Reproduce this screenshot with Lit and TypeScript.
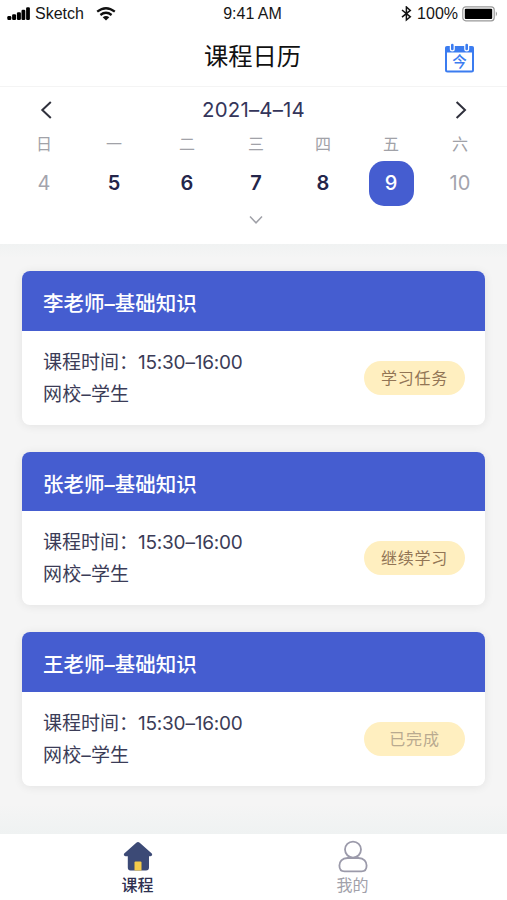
import { LitElement, html, css } from "lit";
import { customElement, property } from "lit/decorators.js";
import { classMap } from "lit/directives/class-map.js";

interface Day {
  week: string;
  date: number;
  kind: "muted" | "normal" | "selected";
}

const DAYS: Day[] = [
  { week: "日", date: 4, kind: "muted" },
  { week: "一", date: 5, kind: "normal" },
  { week: "二", date: 6, kind: "normal" },
  { week: "三", date: 7, kind: "normal" },
  { week: "四", date: 8, kind: "normal" },
  { week: "五", date: 9, kind: "selected" },
  { week: "六", date: 10, kind: "muted" },
];

const LESSONS = [
  { title: "李老师–基础知识", action: "学习任务", done: false },
  { title: "张老师–基础知识", action: "继续学习", done: false },
  { title: "王老师–基础知识", action: "已完成", done: true },
];

@customElement("status-bar")
export class StatusBar extends LitElement {
  static styles = css`
    :host { display: flex; height: 28px; padding: 0 9px 0 7px; align-items: center; color: #161616; font-family: "Liberation Sans", sans-serif; }
    .side { flex: 1; display: flex; align-items: center; }
    .end { justify-content: flex-end; }
    .carrier { margin: 0 12px 0 5px; }
    .level { margin: 0 4px 0 5px; }
    .text { font-size: 16px; line-height: 28px; white-space: nowrap; }
    svg { display: block; flex: none; }
  `;
  render() {
    return html`
      <div class="side">
        <svg width="23" height="14" viewBox="0 0 23 14">
          <rect x="0.3" y="9" width="4" height="4" rx="1.2" />
          <rect x="5.1" y="7.3" width="4" height="5.7" rx="1.2" />
          <rect x="9.9" y="5.2" width="4" height="7.8" rx="1.2" />
          <rect x="14.5" y="2.8" width="3.8" height="10.2" rx="1.2" />
          <rect x="19.1" y="0.2" width="3.8" height="12.8" rx="1.2" />
        </svg>
        <span class="text carrier">Sketch</span>
        <svg width="20" height="14" viewBox="0 0 20 14" fill="none" stroke="#111" stroke-width="2.3">
          <path d="M1.2 4.7 Q10 -2.3 18.8 4.7" />
          <path d="M4.4 8 Q10 3.6 15.6 8" />
          <path d="M6.7 10.2 Q10 7.6 13.3 10.2 L10 13.4Z" fill="#111" stroke="none" />
        </svg>
      </div>
      <span class="text">9:41 AM</span>
      <div class="side end">
        <svg width="11" height="16" viewBox="0 0 11 16" fill="none" stroke="#111" stroke-width="1.5">
          <path d="M1 4 L9.3 10.8 L5.4 14 V1 L9.3 4.4 L1 11.2" />
        </svg>
        <span class="text level">100%</span>
        <svg width="36" height="16" viewBox="0 0 36 16">
          <rect x="0.8" y="0.8" width="31.4" height="14" rx="3" fill="#fff" stroke="#999" stroke-width="1.2" />
          <rect x="2.8" y="2.7" width="27.4" height="10.2" rx="1" />
          <path d="M33.8 5.2 Q36.2 7.8 33.8 10.4Z" fill="#999" />
        </svg>
      </div>
    `;
  }
}

@customElement("week-calendar")
export class WeekCalendar extends LitElement {
  static styles = css`
    :host { display: block; height: 157px; background: #fff; color: #34355a; }
    .month { display: flex; justify-content: space-between; align-items: center; height: 46px; padding: 0 39px; }
    .label { font-size: 20.4px; line-height: 46px; letter-spacing: 0.2px; }
    .week { display: grid; grid-template-columns: 70px 70px 76px 62px 72px 64px 74px; padding-left: 9px; }
    .day { display: flex; flex-direction: column; align-items: center; }
    .name { font-size: 16px; line-height: 22px; color: #a1a2a8; height: 28px; }
    .date { width: 45px; height: 45px; border-radius: 15px; line-height: 45px; text-align: center; font-size: 20px; font-weight: 600; color: #24254a; }
    .muted { color: #a3a4ad; font-weight: 400; }
    .selected { background: #455dd0; color: #fff; font-weight: 500; }
    .more { display: flex; justify-content: center; padding: 8px 0 0 4px; }
    svg { display: block; }
  `;
  render() {
    return html`
      <div class="month">
        <svg width="14" height="20" viewBox="0 0 14 20" fill="none" stroke="#2f303c" stroke-width="2"><path d="M11.8 2 L3.3 10 L11.8 18" /></svg>
        <span class="label">2021–4–14</span>
        <svg width="14" height="20" viewBox="0 0 14 20" fill="none" stroke="#2f303c" stroke-width="2"><path d="M2.6 2 L11 10 L2.6 18" /></svg>
      </div>
      <div class="week">
        ${DAYS.map(
          (d) => html`<div class="day">
            <span class="name">${d.week}</span>
            <span class=${classMap({ date: true, muted: d.kind === "muted", selected: d.kind === "selected" })}>${d.date}</span>
          </div>`
        )}
      </div>
      <div class="more">
        <svg width="16" height="12" viewBox="0 0 16 12" fill="none" stroke="#a0a1a8" stroke-width="1.5"><path d="M2 2.5 L8 8.8 L14 2.5" /></svg>
      </div>
    `;
  }
}

@customElement("lesson-card")
export class LessonCard extends LitElement {
  @property() heading = "";
  @property() action = "";
  @property({ type: Boolean }) done = false;

  static styles = css`
    :host { display: block; height: 153.7px; border-radius: 8px; overflow: hidden; background: #fff; box-shadow: 0 1px 10px rgba(0, 0, 0, 0.08); }
    .heading { height: 59.5px; line-height: 66px; padding-left: 21px; background: #455dd0; color: #fff; font-size: 20.5px; font-weight: 500; }
    .body { display: flex; justify-content: space-between; align-items: center; height: 94px; padding: 0 20px 0 21px; }
    .info { font-size: 19px; line-height: 32px; color: #3b3c57; padding-top: 2px; }
    .time { letter-spacing: -0.22px; }
    .org { letter-spacing: 0.15px; }
    .pill { width: 101px; height: 34px; border-radius: 17px; background: #ffefc0; color: #927555; font-size: 16px; line-height: 34px; letter-spacing: 0.8px; text-align: center; }
    .done { color: #b9aa90; }
  `;
  render() {
    return html`
      <div class="heading">${this.heading}</div>
      <div class="body">
        <div class="info">
          <div>课程时间：<span class="time">15:30–16:00</span></div>
          <div class="org">网校–学生</div>
        </div>
        <div class=${classMap({ pill: true, done: this.done })}>${this.action}</div>
      </div>
    `;
  }
}

@customElement("app-root")
export class AppRoot extends LitElement {
  static styles = css`
    :host { display: flex; flex-direction: column; width: 507px; height: 900px; overflow: hidden; background: #f5f5f5; font-family: Inter, "Noto Sans CJK SC", sans-serif; }
    .top { background: #fff; height: 87px; box-sizing: border-box; border-bottom: 1px solid #f4f4f4; }
    .bar { display: grid; grid-template-columns: 1fr auto 1fr; align-items: center; height: 56px; padding: 0 32px 0 30px; }
    .title { font-size: 24.3px; line-height: 56px; color: #111; }
    .today { justify-self: end; margin-top: 3px; }
    .list { flex: 1; display: flex; flex-direction: column; gap: 27px; padding: 27px 22px 0; background: linear-gradient(#f0f2f2, #f5f5f5 14px, #f5f5f5 560px, #eff2f2); }
    .tabs { display: flex; height: 66px; background: #fff; padding: 0 47px 0 30px; }
    .tab { flex: 1; display: flex; flex-direction: column; align-items: center; padding-top: 6px; font-size: 16px; line-height: 25px; color: #a1a1aa; }
    .active { color: #2e3050; font-weight: 500; }
    svg { display: block; }
    .glyph { font-size: 14.5px; font-weight: 500; fill: #3b7cf0; text-anchor: middle; }
  `;

  render() {
    return html`
      <div class="top">
        <status-bar></status-bar>
        <div class="bar">
          <span></span>
          <span class="title">课程日历</span>
          <svg class="today" width="31" height="30" viewBox="0 0 31 30">
            <rect x="2" y="4" width="27" height="24.6" rx="1.5" fill="#fff" stroke="#3b7cf0" stroke-width="2" />
            <rect x="1.5" y="3.5" width="28" height="6" fill="#3b7cf0" />
            <g stroke-linecap="round">
              <path d="M8.3 1.5 V6 M22.7 1.5 V6" stroke="#fff" stroke-width="5" />
              <path d="M8.3 2 V6 M22.7 2 V6" stroke="#3b7cf0" stroke-width="2.6" />
            </g>
            <text class="glyph" x="15.5" y="23.6">今</text>
          </svg>
        </div>
      </div>
      <week-calendar></week-calendar>
      <div class="list">
        ${LESSONS.map((l) => html`<lesson-card .heading=${l.title} .action=${l.action} .done=${l.done}></lesson-card>`)}
      </div>
      <div class="tabs">
        <div class="tab active">
          <svg width="32" height="33" viewBox="0 0 32 33">
            <path d="M14.3 2.8 Q16 1.3 17.7 2.8 L29.8 13.6 Q31 16 28.5 16.2 H27 V27.5 Q27 30.4 24 30.4 H8.5 Q5.8 30.4 5.8 27.5 V16.2 H3.5 Q1 16 2.2 13.6Z" fill="#3c4a76" />
            <path d="M12.5 22.5 Q12.5 21.5 13.5 21.5 H18.5 Q19.5 21.5 19.5 22.5 V30.4 H12.5Z" fill="#f4cb4b" />
          </svg>
          课程
        </div>
        <div class="tab">
          <svg width="32" height="33" viewBox="0 0 32 33" fill="none" stroke="#9b9aaa" stroke-width="1.8">
            <circle cx="16" cy="9.6" r="8" />
            <path d="M10.5 18 H21.5 C27 18 29.6 21.8 29.6 25.5 C29.6 29.6 27.5 31.4 24.5 31.4 H7.5 C4.5 31.4 2.4 29.6 2.4 25.5 C2.4 21.8 5 18 10.5 18Z" />
          </svg>
          我的
        </div>
      </div>
    `;
  }
}
